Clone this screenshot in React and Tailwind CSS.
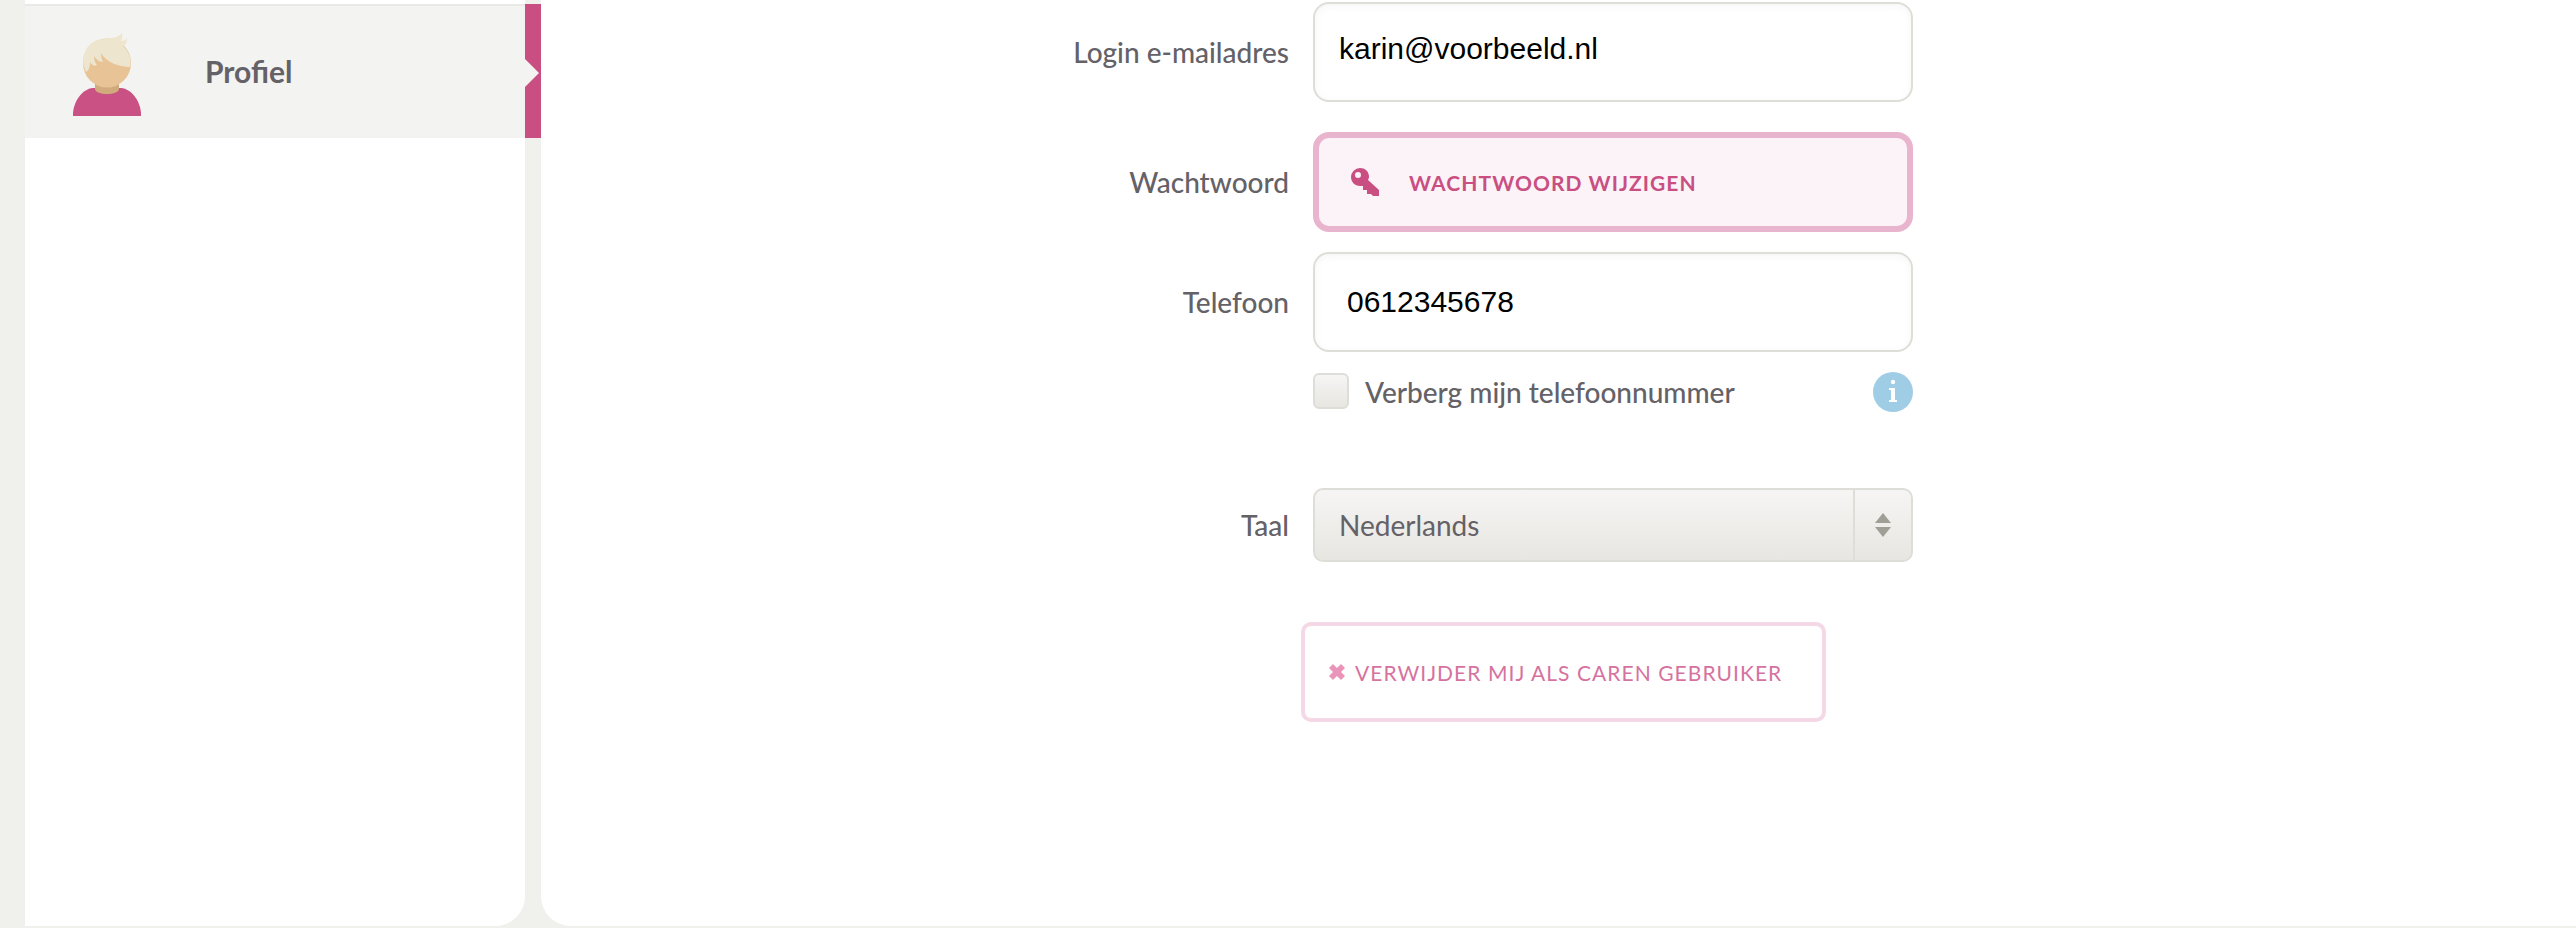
import React from "react";

const labelText = "font-medium text-[28px] leading-9 text-[#646167]";
const row =
  "grid grid-cols-[748fr_minmax(0,600px)_639fr] gap-x-6 items-center";

function Avatar() {
  return (
    <svg viewBox="0 0 68 84" className="w-[68px] h-[84px]" aria-hidden="true">
      <path d="M0 83V80C1 68 9 56 20 55H48C59 56 67 68 68 80V83Z" fill="#c95183" />
      <path d="M22 46H46V56C46 59 40 61 34 61S22 59 22 56Z" fill="#d1ab7c" />
      <ellipse cx="34" cy="30" rx="24" ry="24.500" fill="#e7c396" />
      <path
        d="M13 39C11 35 10 31 10 27C11 15 19 6 32 6C40 5 46 4 49 0C50 3 49 6 48 8C51 8 53 7 54 5C54 9 53 12 50 13C56 18 59 27 57 34C46 34 33 29 28 20C28 24 29 27 30 29C26 29 23 26 21 23C21 27 22 30 24 32C21 34 18 31 17 29C17 34 16 37 13 39Z"
        fill="#ede5cd"
      />
    </svg>
  );
}

function KeyIcon() {
  return (
    <svg viewBox="0 0 28 28" className="w-7 h-7 shrink-0" aria-hidden="true">
      <path
        fillRule="evenodd"
        d="M9 0A9 9 0 0 0 0 9C0 14 4 18 9 18H12V22H16V26H20L22 28H28V22L17 12C18 10 18 9 18 8C17.500 3 14 0 9 0ZM7 4A3 3 0 1 1 7 10A3 3 0 1 1 7 4Z"
        fill="#c94f82"
      />
    </svg>
  );
}

function CrossIcon() {
  return (
    <svg viewBox="0 0 16 16" className="w-4 h-4 shrink-0" aria-hidden="true">
      <path
        d="M4 0L8 4L12 0L16 4L12 8L16 12L12 16L8 12L4 16L0 12L4 8L0 4Z"
        fill="#eb94ba"
      />
    </svg>
  );
}

function InfoIcon() {
  return (
    <svg viewBox="0 0 40 40" className="w-10 h-10" aria-hidden="true">
      <circle cx="20" cy="20" r="20" fill="#a0cde6" />
      <circle cx="20" cy="10" r="2.200" fill="#fff" />
      <path d="M16 16H22V28H24V30H16V28H18V18H16Z" fill="#fff" />
    </svg>
  );
}

function Sidebar() {
  return (
    <aside className="w-[500px] shrink-0 bg-white rounded-br-[30px] pt-1">
      <a href="#profiel" className="flex -mr-4 h-[134px]">
        <span className="flex-1 flex items-start bg-[#f3f3f1] border-t-2 border-[#e9e9e5] pt-[27px] pl-12 gap-16">
          <Avatar />
          <span className="pt-5 font-bold text-[30px] leading-9 text-[#646167]">Profiel</span>
        </span>
        <span className="w-4 bg-[#c94f82] flex items-center">
          <svg viewBox="0 0 14 28" className="w-3.5 h-7 mt-1" aria-hidden="true">
            <path d="M0 0L14 14L0 28Z" fill="#f3f3f1" />
          </svg>
        </span>
      </a>
    </aside>
  );
}

const textBox =
  "w-full h-[100px] rounded-2xl border-2 border-[#deded8] bg-white text-[30px] text-black font-['Liberation_Sans',Arial,sans-serif] shadow-[inset_0_2px_8px_rgba(0,0,0,0.04)]";

function ProfileForm() {
  return (
    <form className="pt-0.5" onSubmit={(e) => e.preventDefault()}>
      <div className={row}>
        <label htmlFor="email" className={`${labelText} text-right`}>
          Login e-mailadres
        </label>
        <input id="email" type="email" defaultValue="karin@voorbeeld.nl" className={`${textBox} px-6 pb-1.5`} />
      </div>

      <div className={`${row} mt-[30px]`}>
        <span id="password-label" className={`${labelText} text-right`}>
          Wachtwoord
        </span>
        <button
          type="button"
          aria-describedby="password-label"
          className="w-full h-[100px] rounded-2xl border-[6px] border-[#e9b4cd] bg-[#fcf3f8] flex items-center gap-[30px] pl-8 text-[21px] leading-7 font-bold uppercase tracking-wider text-[#c94f82]"
        >
          <KeyIcon />
          <span className="pt-0.5">Wachtwoord wijzigen</span>
        </button>
      </div>

      <div className={`${row} mt-5`}>
        <label htmlFor="phone" className={`${labelText} text-right`}>
          Telefoon
        </label>
        <input id="phone" type="tel" defaultValue="0612345678" className={`${textBox} px-8`} />
      </div>

      <div className={`${row} mt-5`}>
        <div className="col-start-2 flex items-center justify-between">
          <label className={`${labelText} flex items-center gap-4`}>
            <input
              type="checkbox"
              className="appearance-none w-9 h-9 -mt-0.5 rounded-md border-2 border-[#deded8] bg-linear-to-b from-[#f6f5f4] to-[#e7e6e1]"
            />
            Verberg mijn telefoonnummer
          </label>
          <button type="button" aria-label="Informatie">
            <InfoIcon />
          </button>
        </div>
      </div>

      <div className={`${row} mt-[76px]`}>
        <label htmlFor="language" className={`${labelText} text-right`}>
          Taal
        </label>
        <div className="relative">
          <select
            id="language"
            defaultValue="nl"
            className="block appearance-none w-full h-[74px] rounded-[10px] border-2 border-[#deded8] bg-linear-to-b from-[#f6f5f4] to-[#e7e6e1] pl-6 pr-16 text-[28px] text-[#646167]"
          >
            <option value="nl">Nederlands</option>
          </select>
          <span className="pointer-events-none absolute inset-y-0.5 right-0.5 w-[58px] border-l-2 border-[#deded8] flex items-center justify-center">
            <svg viewBox="0 0 16 24" className="w-4 h-6" aria-hidden="true">
              <path d="M8 0L16 10H0ZM0 14H16L8 24Z" fill="#a09f95" />
            </svg>
          </span>
        </div>
      </div>

      <div className={`${row} mt-[60px]`}>
        <div className="col-start-2 -ml-3">
          <button
            type="button"
            className="h-[100px] rounded-[10px] border-4 border-[#f5d8e6] bg-white flex items-center gap-2.5 pl-6 pr-10 text-[21px] leading-7 uppercase tracking-wider whitespace-nowrap text-[#d6729f]"
          >
            <CrossIcon />
            <span className="pt-0.5">Verwijder mij als Caren gebruiker</span>
          </button>
        </div>
      </div>
    </form>
  );
}

export default function App() {
  return (
    <div className="min-h-screen flex gap-4 bg-[#f0f1ec] pl-[25px] pb-0.5 font-['Lato','Open_Sans',sans-serif]">
      <Sidebar />
      <main className="flex-1 min-w-0 bg-white rounded-bl-[30px]">
        <ProfileForm />
      </main>
    </div>
  );
}
